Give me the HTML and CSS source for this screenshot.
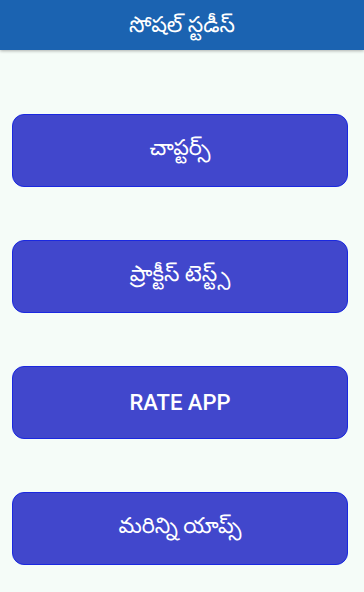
FILE: index.html
```html
<!DOCTYPE html>
<html lang="te">
<head>
<meta charset="utf-8">
<link rel="stylesheet" href="styles.css">
</head>
<body>
<header class="appbar">సోషల్ స్టడీస్</header>
<main class="menu">
  <button class="btn">చాప్టర్స్</button>
  <button class="btn">ప్రాక్టీస్ టెస్ట్స్</button>
  <button class="btn btn-latin">RATE APP</button>
  <button class="btn">మరిన్ని యాప్స్</button>
</main>
</body>
</html>
```
FILE: styles.css
```css
html, body {
  margin: 0;
  padding: 0;
  height: 100%;
}
body {
  background: #f5fcf8;
  font-family: Roboto, "Noto Sans", "Noto Sans Telugu", sans-serif;
  overflow: hidden;
}
.appbar {
  height: 50px;
  box-sizing: border-box;
  padding-top: 4px;
  background: #1b63b1;
  color: #fff;
  font-size: 22px;
  display: flex;
  align-items: center;
  justify-content: center;
  box-shadow: 0 1px 3px rgba(0,0,0,0.3);
  position: relative;
}
.menu {
  display: flex;
  flex-direction: column;
  gap: 53px;
  padding: 64px 16px 0 12px;
}
.btn {
  height: 73px;
  background: #4147cc;
  border: 1px solid #1a28e0;
  border-radius: 12px;
  color: #fff;
  font-family: Roboto, "Noto Sans", "Noto Sans Telugu", sans-serif;
  font-size: 22px;
  display: flex;
  align-items: center;
  justify-content: center;
  padding: 0;
}
.btn-latin {
  font-weight: 500;
}
```
